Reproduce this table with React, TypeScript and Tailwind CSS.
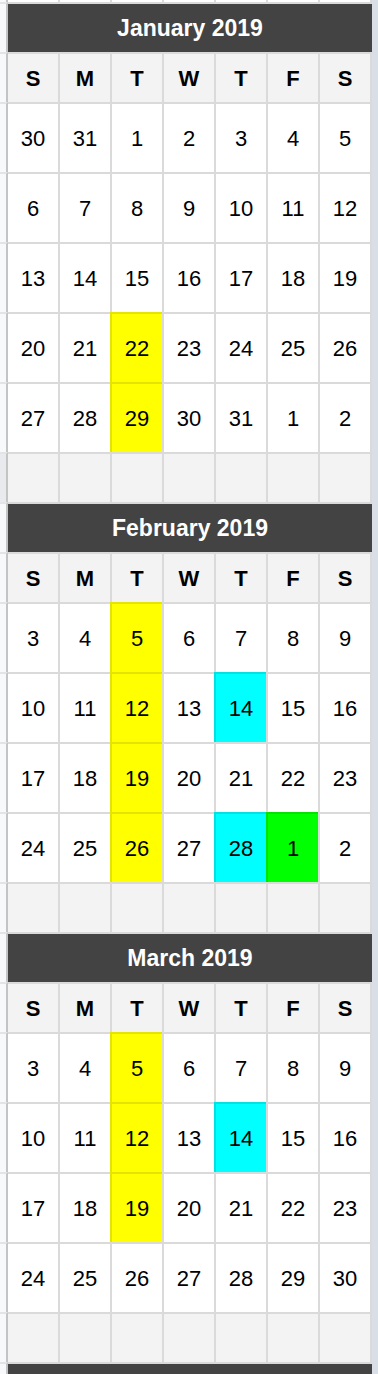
import React from "react";

type Hl = "y" | "c" | "g" | undefined;

interface Month {
  title: string;
  weeks: number[][];
  marks: Record<string, Hl>;
}

// sheet-style fills, the gridline under a fill gets a slightly darker tint
const fills: Record<string, string> = {
  y: "bg-[#ffff00] border-[#e4e400]",
  c: "bg-[#00ffff] border-[#00e2e2]",
  g: "bg-[#00ff00] border-[#00e200]",
};

const days = ["S", "M", "T", "W", "T", "F", "S"];

const months: Month[] = [
  {
    title: "January 2019",
    weeks: [
      [30, 31, 1, 2, 3, 4, 5],
      [6, 7, 8, 9, 10, 11, 12],
      [13, 14, 15, 16, 17, 18, 19],
      [20, 21, 22, 23, 24, 25, 26],
      [27, 28, 29, 30, 31, 1, 2],
    ],
    marks: { "3-2": "y", "4-2": "y" },
  },
  {
    title: "February 2019",
    weeks: [
      [3, 4, 5, 6, 7, 8, 9],
      [10, 11, 12, 13, 14, 15, 16],
      [17, 18, 19, 20, 21, 22, 23],
      [24, 25, 26, 27, 28, 1, 2],
    ],
    marks: { "0-2": "y", "1-2": "y", "2-2": "y", "3-2": "y", "1-4": "c", "3-4": "c", "3-5": "g" },
  },
  {
    title: "March 2019",
    weeks: [
      [3, 4, 5, 6, 7, 8, 9],
      [10, 11, 12, 13, 14, 15, 16],
      [17, 18, 19, 20, 21, 22, 23],
      [24, 25, 26, 27, 28, 29, 30],
    ],
    marks: { "0-2": "y", "1-2": "y", "2-2": "y", "1-4": "c" },
  },
];

const Row = ({
  h,
  stub = "bg-[#f8f9fa]",
  top = true,
  children,
}: {
  h: string;
  stub?: string;
  top?: boolean;
  children: React.ReactNode;
}) => (
  <div className={`flex ${h}`}>
    <div
      className={`w-[8px] shrink-0 border-r-2 border-r-[#c4c4c4] ${top ? "border-t-2 border-t-[#e3e4e6]" : ""} ${stub}`}
    />
    {children}
  </div>
);

const Cell = ({
  idx,
  hl,
  bg = "bg-white",
  top = true,
  bold,
  children,
}: {
  idx: number;
  hl?: Hl;
  bg?: string;
  top?: boolean;
  bold?: boolean;
  children?: React.ReactNode;
}) => (
  <div
    className={`flex shrink-0 items-center justify-center text-[22px] text-black ${bold ? "font-bold" : ""} ${
      idx === 0 ? "w-[50px]" : "w-[52px] border-l-2"
    } ${top ? "border-t-2" : ""} ${hl ? fills[hl] : `${bg} border-[#dadada]`}`}
  >
    {children}
  </div>
);

const End = () => <div className="w-[8px] shrink-0 border-l-2 border-l-[#dadada] bg-[#dadfe7]" />;

const Title = ({ text }: { text?: string }) => (
  <Row h="h-[50px]">
    <div className="flex w-[364px] shrink-0 items-center justify-center border-t-2 border-[#dadada] bg-[#434343] text-[23px] font-bold text-white">
      {text}
    </div>
    <div className="w-[6px] shrink-0 bg-[#dadfe7]" />
  </Row>
);

const Blank = ({ stub }: { stub?: string }) => (
  <Row h="h-[50px]" stub={stub}>
    {days.map((_, i) => (
      <Cell key={i} idx={i} bg="bg-[#f3f3f3]" />
    ))}
    <End />
  </Row>
);

const MonthBlock = ({ m, first }: { m: Month; first: boolean }) => (
  <div>
    <Title text={m.title} />
    <Row h="h-[50px]">
      {days.map((d, i) => (
        <Cell key={i} idx={i} bg="bg-[#f3f3f3]" bold>
          {d}
        </Cell>
      ))}
      <End />
    </Row>
    {m.weeks.map((week, r) => (
      <Row key={r} h="h-[70px]">
        {week.map((n, i) => (
          <Cell key={i} idx={i} hl={m.marks[`${r}-${i}`]}>
            {n}
          </Cell>
        ))}
        <End />
      </Row>
    ))}
    <Blank stub={first ? "bg-[#e8eaed]" : undefined} />
  </div>
);

export default function App() {
  return (
    <div
      className="h-[1374px] w-[378px] overflow-hidden bg-white"
      style={{ fontFamily: '"Liberation Sans", Arial, Helvetica, sans-serif' }}
    >
      <Row h="h-[2px]" top={false}>
        {days.map((_, i) => (
          <Cell key={i} idx={i} top={false} />
        ))}
        <End />
      </Row>
      {months.map((m, i) => (
        <MonthBlock key={m.title} m={m} first={i === 0} />
      ))}
      {/* next month's header bar, only its top edge is in view */}
      <Title />
    </div>
  );
}
